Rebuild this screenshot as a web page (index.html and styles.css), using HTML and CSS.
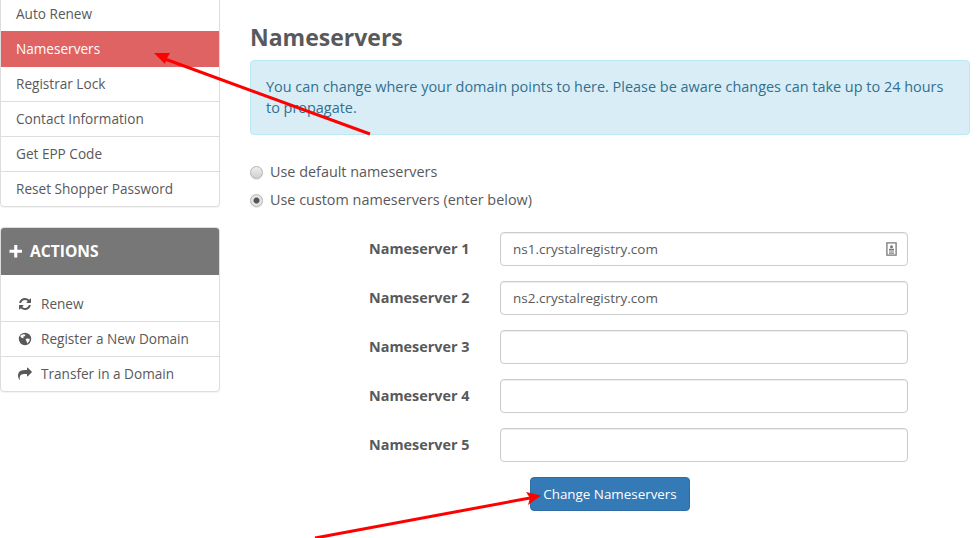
FILE: index.html
```html
<!DOCTYPE html>
<html lang="en">
<head>
    <meta charset="UTF-8">
    <title>Nameservers</title>
    <link rel="stylesheet" href="styles.css">
</head>
<body>
    <div class="page">
        <aside class="sidebar">
            <div class="panel">
                <a class="list-item">Auto Renew</a>
                <a class="list-item active">Nameservers</a>
                <a class="list-item">Registrar Lock</a>
                <a class="list-item">Contact Information</a>
                <a class="list-item">Get EPP Code</a>
                <a class="list-item">Reset Shopper Password</a>
            </div>

            <div class="panel actions">
                <h3 class="panel-heading">
                    <svg class="heading-icon" viewBox="0 0 14 14"><path d="M5.2 1h3.1v4.7H13v3.1H8.300v4.700H5.200V8.800H.5V5.700h4.700z"/></svg>
                    ACTIONS
                </h3>
                <div class="panel-body">
                    <a class="list-item">
                        <svg class="item-icon" viewBox="0 0 1792 1792"><path d="M1639 1056q0 5-1 7-64 268-268 434.500t-478 166.500q-146 0-282.500-55t-243.500-157l-129 129q-19 19-45 19t-45-19-19-45v-448q0-26 19-45t45-19h448q26 0 45 19t19 45-19 45l-137 137q71 66 161 102t187 36q134 0 250-65t186-179q11-17 53-117 8-23 30-23h192q13 0 22.500 9.500t9.500 22.500zm25-800v448q0 26-19 45t-45 19h-448q-26 0-45-19t-19-45 19-45l138-138q-148-137-349-137-134 0-250 65t-186 179q-11 17-53 117-8 23-30 23h-199q-13 0-22.500-9.500t-9.500-22.500v-7q65-268 270-434.500t480-166.500q146 0 284 55.500t245 156.500l130-129q19-19 45-19t45 19 19 45z"/></svg>
                        Renew
                    </a>
                    <a class="list-item">
                        <svg class="item-icon" viewBox="0 0 14 14"><circle cx="7" cy="7" r="6.200"/><path fill="#fff" d="M2.500 3.600 5.200 2.200 7.600 2.800 6.800 4.300 5.300 4.600 5.600 6.200 3.900 6.100 2.600 5zM8.600 6.400 11.800 6.700 11.300 9.300 9.300 11.400 8.500 9.300 7.600 7.600z"/></svg>
                        Register a New Domain
                    </a>
                    <a class="list-item">
                        <svg class="item-icon" viewBox="0 0 1792 1792"><path d="M1792 640q0 26-19 45l-512 512q-19 19-45 19t-45-19-19-45v-256h-224q-98 0-175.500 6t-154 21.500-133 42.500-105.500 69.500-80 101-48.500 138.500-17.500 181q0 55 5 123 0 6 2.500 23.500t2.500 26.500q0 15-8.500 25t-23.500 10q-16 0-28-17-7-9-13-22t-13.500-30-10.500-24q-127-285-127-451 0-199 53-333 162-403 875-403h224v-256q0-26 19-45t45-19 45 19l512 512q19 19 19 45z"/></svg>
                        Transfer in a Domain
                    </a>
                </div>
            </div>
        </aside>

        <main class="content">
            <h1>Nameservers</h1>
            <div class="alert-info">You can change where your domain points to here. Please be aware changes can take up to 24 hours to propagate.</div>

            <form class="ns-form">
                <label class="radio-row"><input type="radio" name="nsmode"> Use default nameservers</label>
                <label class="radio-row"><input type="radio" name="nsmode" checked> Use custom nameservers (enter below)</label>

                <div class="ns-fields">
                    <div class="form-group">
                        <label for="ns1">Nameserver 1</label>
                        <div class="input-wrap">
                            <input type="text" id="ns1" value="ns1.crystalregistry.com">
                            <svg class="autofill-icon" viewBox="0 0 11 14"><path fill="none" stroke="#777" stroke-width="1.300" d="M.9.9h9.200v12.200H.9z"/><circle cx="5.500" cy="4.700" r="1.500" fill="#777"/><path fill="#777" d="M3 6.800h5v1.700H3zM3 9.500h5v.9H3zM3 11h5v.8H3z"/></svg>
                        </div>
                    </div>
                    <div class="form-group">
                        <label for="ns2">Nameserver 2</label>
                        <input type="text" id="ns2" value="ns2.crystalregistry.com">
                    </div>
                    <div class="form-group">
                        <label for="ns3">Nameserver 3</label>
                        <input type="text" id="ns3">
                    </div>
                    <div class="form-group">
                        <label for="ns4">Nameserver 4</label>
                        <input type="text" id="ns4">
                    </div>
                    <div class="form-group">
                        <label for="ns5">Nameserver 5</label>
                        <input type="text" id="ns5">
                    </div>
                </div>

                <div class="form-actions">
                    <button type="button">Change Nameservers</button>
                </div>
            </form>
        </main>
    </div>

    <!-- red arrows drawn over the screenshot -->
    <svg class="arrows" width="980" height="538" viewBox="0 0 980 538">
        <g stroke="#f00" stroke-width="3" fill="none">
            <path d="M370 134 165 59"/>
            <path d="M315 538 530 498"/>
        </g>
        <g fill="#f00">
            <path d="M154 53 170 53 167 58 165 64z"/>
            <path d="M541 495.500 526 492 530 498 528 505z"/>
        </g>
    </svg>
</body>
</html>
```
FILE: styles.css
```css
html, body {
    height: 100%;
}
body {
    margin: 0;
    background: #fff;
    color: #58595b;
    font-family: 'Open Sans', Arial, sans-serif;
    font-size: 14.4px;
    line-height: 20px;
    overflow: hidden;
}
.page {
    display: flex;
    margin-top: -4px; /* page is scrolled a little */
}
.sidebar {
    width: 220px;
    flex: none;
    font-size: 13.6px;
}
.panel {
    background: #fff;
    border: 1px solid #ddd;
    border-radius: 4px;
    box-shadow: 0 1px 1px rgba(0,0,0,0.05);
    overflow: hidden;
}
.list-item {
    display: flex;
    align-items: center;
    height: 35px;
    box-sizing: border-box;
    padding: 0 15px;
    border-bottom: 1px solid #ddd;
    color: #58595b;
}
.panel > .list-item:last-child, .panel-body .list-item:last-child {
    border-bottom: none;
    height: 34px;
}
.list-item.active {
    background: #e06363;
    color: #fff;
    height: 36px;
    margin-top: -1px;
    border-bottom: none;
}
.actions {
    margin-top: 20px;
}
.panel-heading {
    display: flex;
    align-items: center;
    gap: 7px;
    height: 47px;
    margin: 0;
    padding: 0 8px 2px;
    box-sizing: border-box;
    background: #777;
    color: #fff;
    font-size: 15.6px;
    font-weight: 700;
}
.heading-icon {
    width: 14px;
    height: 14px;
    fill: #fff;
}
.panel-body {
    padding-top: 12px;
}
.panel-body .list-item {
    padding-left: 17px;
}
.item-icon {
    width: 14px;
    height: 14px;
    flex: none;
    margin-right: 9px;
    fill: #58595b;
}
.content {
    width: 720px;
    margin-left: 30px;
}
h1 {
    margin: 25px 0 7px 0;
    font-size: 23px;
    line-height: 32px;
    font-weight: 700;
    color: #58595b;
}
.alert-info {
    background: #d9edf7;
    border: 1px solid #bce8f1;
    border-radius: 4px;
    color: #31708f;
    font-size: 14.45px;
    line-height: 21px;
    padding: 15px;
    height: 75px;
    box-sizing: border-box;
}
.ns-form {
    margin-top: 23px;
}
.radio-row {
    display: flex;
    align-items: center;
    height: 28px;
}
.radio-row input {
    appearance: none;
    width: 13px;
    height: 13px;
    margin: 0 7px 0 0;
    border: 1px solid #b4b4b4;
    border-radius: 50%;
    background: linear-gradient(#eee, #d0d0d0);
    box-shadow: 0 1px 1px rgba(0,0,0,0.1);
}
.radio-row input:checked {
    background: radial-gradient(circle, #555 0, #555 2.500px, #e4e4e4 3.500px);
}
.ns-fields {
    margin-top: 18px;
    padding-left: 119px;
}
.form-group {
    display: flex;
    align-items: center;
    margin-bottom: 15px;
}
.form-group label {
    width: 131px;
    flex: none;
    font-weight: 700;
}
.form-group input, .input-wrap {
    width: 408px;
    height: 34px;
    box-sizing: border-box;
}
.form-group input {
    padding: 6px 12px 7px;
    background: #fff;
    border: 1px solid #ccc;
    border-radius: 4px;
    box-shadow: inset 0 1px 1px rgba(0,0,0,0.075);
    color: #58595b;
    font-family: inherit;
    font-size: 13.5px;
}
.input-wrap {
    position: relative;
}
.autofill-icon {
    position: absolute;
    top: 10px;
    right: 11px;
    width: 11px;
    height: 14px;
}
.form-actions {
    padding-left: 280px;
}
.form-actions button {
    width: 160px;
    height: 34px;
    padding: 0;
    background: #337ab7;
    border: 1px solid #2e6da4;
    border-radius: 4px;
    color: #fff;
    font-family: inherit;
    font-size: 13.4px;
}
.arrows {
    position: absolute;
    top: 0;
    left: 0;
    pointer-events: none;
}
```
